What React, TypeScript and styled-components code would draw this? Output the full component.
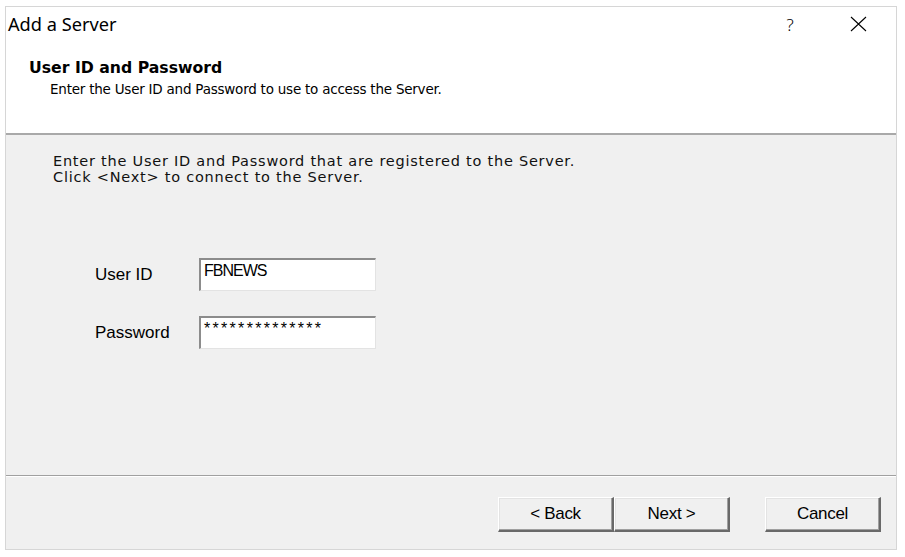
import React from 'react';
import styled, { createGlobalStyle } from 'styled-components';

const GlobalStyle = createGlobalStyle`
  html, body {
    margin: 0;
    padding: 0;
    background: #ffffff;
  }
  * {
    box-sizing: border-box;
  }
`;

const Window = styled.div`
  margin: 6px 0 0 5px;
  width: 892px;
  height: 544px;
  border: 1px solid #d6d6d6;
  display: flex;
  flex-direction: column;
  background: #f0f0f0;
`;

const TitleBar = styled.div`
  height: 34px;
  display: flex;
  align-items: center;
  background: #ffffff;
  padding-left: 2px;
`;

const Title = styled.div`
  flex: 1;
  font-family: 'Noto Sans', 'Liberation Sans', sans-serif;
  font-size: 18.2px;
  color: #000000;
`;

const CaptionButton = styled.div<{ $width: number }>`
  width: ${({ $width }) => $width}px;
  height: 34px;
  display: flex;
  align-items: center;
  justify-content: center;
  font-family: 'Noto Sans', 'Liberation Sans', sans-serif;
  font-size: 17px;
  font-weight: 300;
  color: #000000;
`;

const Header = styled.div`
  height: 94px;
  background: #ffffff;
  padding: 17px 0 0 23px;
  border-bottom: 2px solid #a9a9a9;
`;

const Heading = styled.div`
  font-family: 'DejaVu Sans', Tahoma, sans-serif;
  font-weight: bold;
  font-size: 15.7px;
  line-height: 20px;
  color: #000000;
`;

const SubHeading = styled.div`
  margin: 2px 0 0 21px;
  font-family: 'DejaVu Sans', Tahoma, sans-serif;
  font-size: 13.5px;
  line-height: 18px;
  letter-spacing: -0.23px;
  color: #000000;
`;

const Body = styled.div`
  flex: 1;
  padding: 18px 0 0 47px;
  border-bottom: 1px solid #a0a0a0;
  box-shadow: 0 1px 0 #ffffff;
`;

const Intro = styled.div`
  height: 32px;
  font-family: 'DejaVu Sans', sans-serif;
  font-size: 14.5px;
  line-height: 16px;
  letter-spacing: 0.76px;
  color: #111111;
`;

const Form = styled.div`
  margin: 73px 0 0 42px;
  display: grid;
  grid-template-columns: 104px 177px;
  row-gap: 25px;
  align-items: center;
`;

const Label = styled.div`
  font-family: 'Liberation Sans', Arial, sans-serif;
  font-size: 17px;
  color: #000000;
`;

const Field = styled.div<{ $spacing?: number }>`
  height: 33px;
  background: #ffffff;
  border-top: 2px solid #8c8c8c;
  border-left: 2px solid #8c8c8c;
  border-right: 1px solid #e3e3e3;
  border-bottom: 1px solid #e3e3e3;
  padding: 2px 0 0 3px;
  font-family: 'Liberation Sans', Arial, sans-serif;
  font-size: 16px;
  line-height: 18px;
  letter-spacing: ${({ $spacing }) => $spacing ?? -1}px;
  color: #000000;
`;

const Footer = styled.div`
  height: 73px;
  display: flex;
  align-items: flex-start;
  justify-content: flex-end;
  padding: 21px 15px 0 0;
`;

const Button = styled.button<{ $gap?: number }>`
  width: 116px;
  height: 35px;
  margin-left: ${({ $gap }) => $gap ?? 0}px;
  background: #f0f0f0;
  border-top: 1px solid #ffffff;
  border-left: 1px solid #ffffff;
  border-right: 2px solid #696969;
  border-bottom: 2px solid #696969;
  box-shadow: inset -1px -1px 0 #a0a0a0, inset 1px 1px 0 #e3e3e3;
  font-family: 'Liberation Sans', Arial, sans-serif;
  font-size: 17px;
  letter-spacing: -0.3px;
  color: #000000;
  padding: 0;
`;

const CloseIcon = () => (
  <svg width="17" height="16" viewBox="0 0 17 16">
    <path d="M1 1 L16 15 M16 1 L1 15" stroke="#000" strokeWidth="1.1" fill="none" />
  </svg>
);

export default function App() {
  return (
    <>
      <GlobalStyle />
      <Window>
        <TitleBar>
          <Title>Add a Server</Title>
          <CaptionButton $width={60}>?</CaptionButton>
          <CaptionButton $width={76}>
            <CloseIcon />
          </CaptionButton>
        </TitleBar>
        <Header>
          <Heading>User ID and Password</Heading>
          <SubHeading>Enter the User ID and Password to use to access the Server.</SubHeading>
        </Header>
        <Body>
          <Intro>
            Enter the User ID and Password that are registered to the Server.
            <br />
            Click &lt;Next&gt; to connect to the Server.
          </Intro>
          <Form>
            <Label>User ID</Label>
            <Field>FBNEWS</Field>
            <Label>Password</Label>
            <Field $spacing={2.3}>**************</Field>
          </Form>
        </Body>
        <Footer>
          <Button>&lt; Back</Button>
          <Button>Next &gt;</Button>
          <Button $gap={35}>Cancel</Button>
        </Footer>
      </Window>
    </>
  );
}
